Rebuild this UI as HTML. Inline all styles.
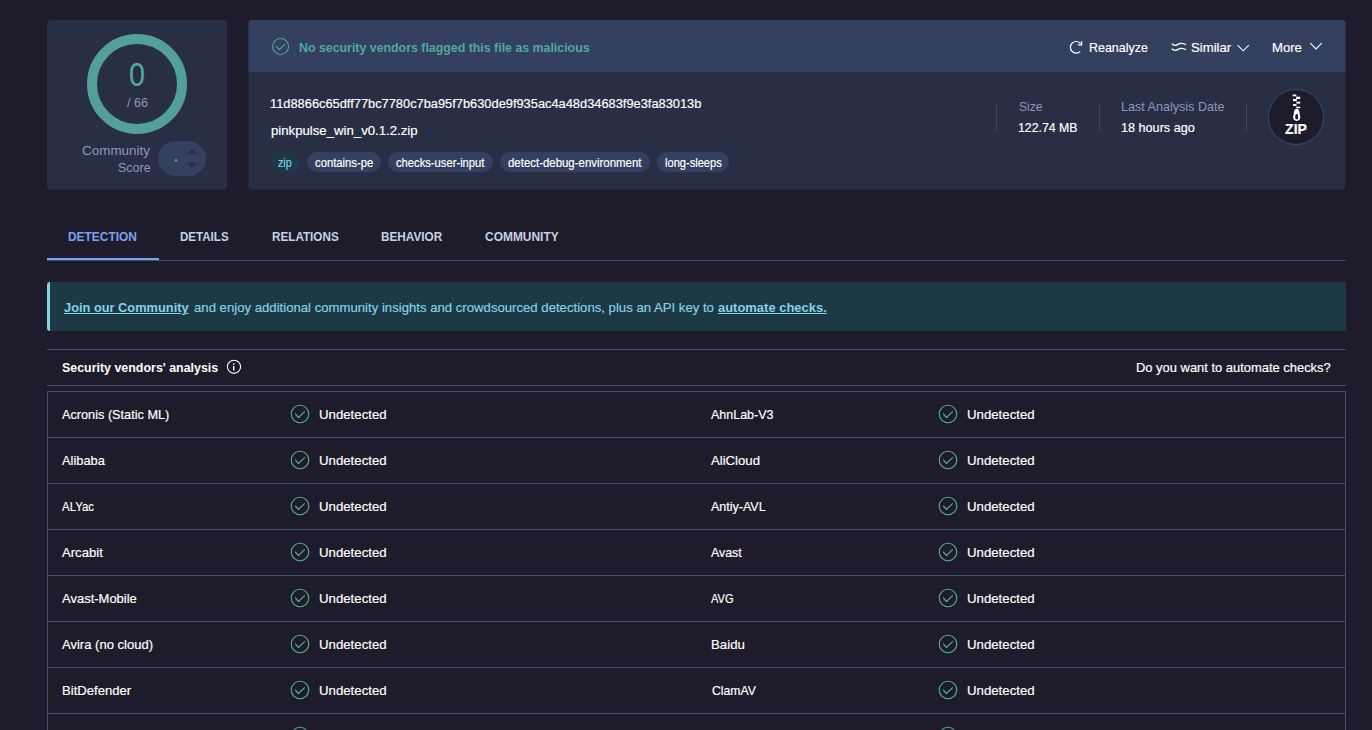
<!DOCTYPE html>
<html lang="en">
<head>
<meta charset="utf-8">
<title>VirusTotal - File - 11d8866c65dff77bc7780c7ba95f7b630de9f935ac4a48d34683f9e3fa83013b</title>
<style>
*{box-sizing:border-box;margin:0;padding:0}
html,body{width:1372px;height:730px;overflow:hidden;background:#1e1c2a}
body{position:relative;font-family:"Liberation Sans",Arial,sans-serif;color:#fff;font-size:13.3px;-webkit-text-stroke:0.18px}
.abs{position:absolute}
.t{position:absolute;white-space:nowrap;line-height:1;transform-origin:0 0}
svg{position:absolute;left:0;top:0;overflow:visible;pointer-events:none}
#ring{left:87px;top:34px;width:100px;height:100px;border-radius:50%;border:10px solid #52a098}
#vote{left:158px;top:140.6px;width:48px;height:35.5px;border-radius:18px;background:#334060}
.pill{position:absolute;top:152px;height:20px;border-radius:10px;background:#334060}
.vdiv{position:absolute;top:103px;width:1px;height:28px;background:#3d4766}
#tabline{left:47px;top:260px;width:1299px;height:1px;background:#424f70}
#tabactive{left:47px;top:258px;width:112px;height:2.3px;background:#7aa2f2}
#banner{left:47px;top:282px;width:1299px;height:49px;background:#1c3945;border-left:3px solid #84d2e4;border-radius:3px 0 0 3px}
.hline{position:absolute;left:47px;width:1299px;height:1px;background:#424f70}
#tbl{left:47px;top:391px;width:1299px;height:345px;border:1px solid #424f70;border-bottom:none}
.rowline{position:absolute;left:48px;width:1297px;height:1px;background:#424f70}
</style>
</head>
<body>
<!-- card backgrounds -->
<svg width="1372" height="730" viewBox="0 0 1372 730">
<defs><clipPath id="cc"><rect x="248.5" y="20" width="1097" height="169.5" rx="4"/></clipPath></defs>
<rect x="47" y="20" width="180" height="169.5" rx="4" fill="#282f45"/>
<rect x="248.5" y="20" width="1097" height="169.5" rx="4" fill="#282f45"/>
<rect x="240" y="20" width="1110" height="52" fill="#334060" clip-path="url(#cc)"/>
</svg>
<section id="score-widget">
<div id="ring" class="abs"></div>
<div id="vote" class="abs"></div>
<span class="t" style="left:128.73px;top:58.00px;font-size:33px;transform:scaleX(0.8706);color:#52a89b;">0</span>
<span class="t" style="left:127.10px;top:96.00px;font-size:13.6px;transform:scaleX(0.9225);color:#8d98b8;-webkit-text-stroke:0;">/ 66</span>
<span class="t" style="left:82.20px;top:144.00px;font-size:13.6px;transform:scaleX(0.9892);color:#8d98b8;-webkit-text-stroke:0;">Community</span>
<span class="t" style="left:118.20px;top:161.00px;font-size:13.6px;transform:scaleX(0.9213);color:#8d98b8;-webkit-text-stroke:0;">Score</span>
</section>
<section id="file-card">
<span class="t" style="left:298.60px;top:41.00px;font-size:13.6px;transform:scaleX(0.9094);font-weight:bold;-webkit-text-stroke:0;color:#52a89b;">No security vendors flagged this file as malicious</span>
<span class="t" style="left:1088.88px;top:41.00px;font-size:13.6px;transform:scaleX(0.9159);">Reanalyze</span>
<span class="t" style="left:1191.30px;top:41.00px;font-size:13.6px;transform:scaleX(0.9688);">Similar</span>
<span class="t" style="left:1272.33px;top:41.00px;font-size:13.6px;transform:scaleX(0.9656);">More</span>
<div class="pill" style="left:270.5px;width:29.4px;background:#1c3a46"></div>
<div class="pill" style="left:307px;width:73.8px"></div>
<div class="pill" style="left:388px;width:104.6px"></div>
<div class="pill" style="left:500px;width:150.2px"></div>
<div class="pill" style="left:657px;width:72px"></div>
<div class="vdiv" style="left:996px"></div>
<div class="vdiv" style="left:1099px"></div>
<div class="vdiv" style="left:1246px"></div>
<div class="abs" style="left:1268px;top:89px;width:56px;height:56px;border-radius:50%;background:#1e1c2a;border:1px solid #3c4a70"></div>
<span class="t" style="left:270.16px;top:97.00px;font-size:13.6px;transform:scaleX(0.9442);">11d8866c65dff77bc7780c7ba95f7b630de9f935ac4a48d34683f9e3fa83013b</span>
<span class="t" style="left:271.10px;top:124.00px;font-size:13.6px;transform:scaleX(0.9696);">pinkpulse_win_v0.1.2.zip</span>
<span class="t" style="left:278.30px;top:157.00px;font-size:12.2px;transform:scaleX(0.8733);color:#7fd0e2;">zip</span>
<span class="t" style="left:315.00px;top:157.00px;font-size:12.2px;transform:scaleX(0.9236);">contains-pe</span>
<span class="t" style="left:396.30px;top:157.00px;font-size:12.2px;transform:scaleX(0.9194);">checks-user-input</span>
<span class="t" style="left:507.90px;top:157.00px;font-size:12.2px;transform:scaleX(0.9378);">detect-debug-environment</span>
<span class="t" style="left:664.90px;top:157.00px;font-size:12.2px;transform:scaleX(0.9094);">long-sleeps</span>
<span class="t" style="left:1018.80px;top:100.00px;font-size:13.6px;transform:scaleX(0.8886);color:#8d98b8;-webkit-text-stroke:0;">Size</span>
<span class="t" style="left:1018.19px;top:121.00px;font-size:13.6px;transform:scaleX(0.9060);">122.74 MB</span>
<span class="t" style="left:1120.97px;top:100.00px;font-size:13.6px;transform:scaleX(0.9251);color:#8d98b8;-webkit-text-stroke:0;">Last Analysis Date</span>
<span class="t" style="left:1121.37px;top:121.00px;font-size:13.6px;transform:scaleX(0.9293);">18 hours ago</span>
<span class="t" style="left:1285.1px;top:122.3px;font-size:14px;font-weight:bold;">ZIP</span>
</section>
<nav id="tabs">
<div id="tabline" class="abs"></div>
<div id="tabactive" class="abs"></div>
<span class="t" style="left:68.20px;top:230.00px;font-size:13.0px;transform:scaleX(0.9180);font-weight:bold;-webkit-text-stroke:0;color:#7aa2f2;">DETECTION</span>
<span class="t" style="left:180.00px;top:230.00px;font-size:13.0px;transform:scaleX(0.8895);font-weight:bold;-webkit-text-stroke:0;color:#c7d0e8;">DETAILS</span>
<span class="t" style="left:271.50px;top:230.00px;font-size:13.0px;transform:scaleX(0.8996);font-weight:bold;-webkit-text-stroke:0;color:#c7d0e8;">RELATIONS</span>
<span class="t" style="left:381.20px;top:230.00px;font-size:13.0px;transform:scaleX(0.9053);font-weight:bold;-webkit-text-stroke:0;color:#c7d0e8;">BEHAVIOR</span>
<span class="t" style="left:485.00px;top:230.00px;font-size:13.0px;transform:scaleX(0.9194);font-weight:bold;-webkit-text-stroke:0;color:#c7d0e8;">COMMUNITY</span>
</nav>
<aside id="community-banner">
<div id="banner" class="abs"></div>
<span class="t" style="left:64.30px;top:301.00px;font-size:13.6px;transform:scaleX(0.9427);font-weight:bold;-webkit-text-stroke:0;color:#84d2e6;text-decoration:underline;text-underline-offset:0.6px;text-decoration-thickness:1px">Join our Community</span>
<span class="t" style="left:193.80px;top:301.00px;font-size:13.6px;transform:scaleX(0.9677);color:#84d2e6;">and enjoy additional community insights and crowdsourced detections, plus an API key to</span>
<span class="t" style="left:718.20px;top:301.00px;font-size:13.6px;transform:scaleX(0.9531);font-weight:bold;-webkit-text-stroke:0;color:#84d2e6;text-decoration:underline;text-underline-offset:0.6px;text-decoration-thickness:1px">automate checks.</span>
</aside>
<section id="vendors">
<div class="hline" style="top:349px"></div>
<div class="hline" style="top:385px"></div>
<div id="tbl" class="abs"></div>
<span class="t" style="left:61.60px;top:361.00px;font-size:13.6px;transform:scaleX(0.9137);font-weight:bold;-webkit-text-stroke:0;">Security vendors' analysis</span>
<span class="t" style="left:1136.15px;top:361.00px;font-size:13.6px;transform:scaleX(0.9510);">Do you want to automate checks?</span>
<div class="rowline" style="top:437px"></div>
<span class="t" style="left:62.20px;top:408.00px;font-size:13.6px;transform:scaleX(0.9345);">Acronis (Static ML)</span>
<span class="t" style="left:318.93px;top:408.00px;font-size:13.6px;transform:scaleX(0.9725);">Undetected</span>
<span class="t" style="left:710.90px;top:408.00px;font-size:13.6px;transform:scaleX(0.9190);">AhnLab-V3</span>
<span class="t" style="left:967.43px;top:408.00px;font-size:13.6px;transform:scaleX(0.9725);">Undetected</span>
<div class="rowline" style="top:483px"></div>
<span class="t" style="left:62.20px;top:454.00px;font-size:13.6px;transform:scaleX(0.9435);">Alibaba</span>
<span class="t" style="left:318.93px;top:454.00px;font-size:13.6px;transform:scaleX(0.9725);">Undetected</span>
<span class="t" style="left:710.90px;top:454.00px;font-size:13.6px;transform:scaleX(0.9668);">AliCloud</span>
<span class="t" style="left:967.43px;top:454.00px;font-size:13.6px;transform:scaleX(0.9725);">Undetected</span>
<div class="rowline" style="top:529px"></div>
<span class="t" style="left:62.20px;top:500.00px;font-size:13.6px;transform:scaleX(0.8421);">ALYac</span>
<span class="t" style="left:318.93px;top:500.00px;font-size:13.6px;transform:scaleX(0.9725);">Undetected</span>
<span class="t" style="left:710.90px;top:500.00px;font-size:13.6px;transform:scaleX(0.9186);">Antiy-AVL</span>
<span class="t" style="left:967.43px;top:500.00px;font-size:13.6px;transform:scaleX(0.9725);">Undetected</span>
<div class="rowline" style="top:575px"></div>
<span class="t" style="left:62.20px;top:546.00px;font-size:13.6px;transform:scaleX(0.9640);">Arcabit</span>
<span class="t" style="left:318.93px;top:546.00px;font-size:13.6px;transform:scaleX(0.9725);">Undetected</span>
<span class="t" style="left:710.90px;top:546.00px;font-size:13.6px;transform:scaleX(0.9095);">Avast</span>
<span class="t" style="left:967.43px;top:546.00px;font-size:13.6px;transform:scaleX(0.9725);">Undetected</span>
<div class="rowline" style="top:621px"></div>
<span class="t" style="left:62.20px;top:592.00px;font-size:13.6px;transform:scaleX(0.9555);">Avast-Mobile</span>
<span class="t" style="left:318.93px;top:592.00px;font-size:13.6px;transform:scaleX(0.9725);">Undetected</span>
<span class="t" style="left:710.90px;top:592.00px;font-size:13.6px;transform:scaleX(0.8148);">AVG</span>
<span class="t" style="left:967.43px;top:592.00px;font-size:13.6px;transform:scaleX(0.9725);">Undetected</span>
<div class="rowline" style="top:667px"></div>
<span class="t" style="left:62.20px;top:638.00px;font-size:13.6px;transform:scaleX(0.9584);">Avira (no cloud)</span>
<span class="t" style="left:318.93px;top:638.00px;font-size:13.6px;transform:scaleX(0.9725);">Undetected</span>
<span class="t" style="left:710.62px;top:638.00px;font-size:13.6px;transform:scaleX(0.9757);">Baidu</span>
<span class="t" style="left:967.43px;top:638.00px;font-size:13.6px;transform:scaleX(0.9725);">Undetected</span>
<div class="rowline" style="top:713px"></div>
<span class="t" style="left:62.04px;top:684.00px;font-size:13.6px;transform:scaleX(0.9641);">BitDefender</span>
<span class="t" style="left:318.93px;top:684.00px;font-size:13.6px;transform:scaleX(0.9725);">Undetected</span>
<span class="t" style="left:711.60px;top:684.00px;font-size:13.6px;transform:scaleX(0.8979);">ClamAV</span>
<span class="t" style="left:967.43px;top:684.00px;font-size:13.6px;transform:scaleX(0.9725);">Undetected</span>
<div class="rowline" style="top:759px"></div>
<span class="t" style="left:62.00px;top:730.00px;font-size:13.6px;">Bkav Pro</span>
<span class="t" style="left:318.93px;top:730.00px;font-size:13.6px;transform:scaleX(0.9725);">Undetected</span>
<span class="t" style="left:711.60px;top:730.00px;font-size:13.6px;">CMC</span>
<span class="t" style="left:967.43px;top:730.00px;font-size:13.6px;transform:scaleX(0.9725);">Undetected</span>
</section>
<!-- icons -->
<svg width="1372" height="730" viewBox="0 0 1372 730">
<circle cx="280.6" cy="46.5" r="7.95" fill="none" stroke="#4fa79b" stroke-width="1.1"/><polyline points="276.10,46.20 279.20,49.70 285.00,44.10" fill="none" stroke="#4fa79b" stroke-width="1.2000000000000002"/>
<circle cx="300" cy="414" r="8.73" fill="none" stroke="#52a89b" stroke-width="1.15"/><polyline points="295.08,413.67 298.47,417.50 304.81,411.37" fill="none" stroke="#52a89b" stroke-width="1.25"/><circle cx="948.0" cy="414" r="8.73" fill="none" stroke="#52a89b" stroke-width="1.15"/><polyline points="943.08,413.67 946.47,417.50 952.81,411.37" fill="none" stroke="#52a89b" stroke-width="1.25"/><circle cx="300" cy="460" r="8.73" fill="none" stroke="#52a89b" stroke-width="1.15"/><polyline points="295.08,459.67 298.47,463.50 304.81,457.37" fill="none" stroke="#52a89b" stroke-width="1.25"/><circle cx="948.0" cy="460" r="8.73" fill="none" stroke="#52a89b" stroke-width="1.15"/><polyline points="943.08,459.67 946.47,463.50 952.81,457.37" fill="none" stroke="#52a89b" stroke-width="1.25"/><circle cx="300" cy="506" r="8.73" fill="none" stroke="#52a89b" stroke-width="1.15"/><polyline points="295.08,505.67 298.47,509.50 304.81,503.37" fill="none" stroke="#52a89b" stroke-width="1.25"/><circle cx="948.0" cy="506" r="8.73" fill="none" stroke="#52a89b" stroke-width="1.15"/><polyline points="943.08,505.67 946.47,509.50 952.81,503.37" fill="none" stroke="#52a89b" stroke-width="1.25"/><circle cx="300" cy="552" r="8.73" fill="none" stroke="#52a89b" stroke-width="1.15"/><polyline points="295.08,551.67 298.47,555.50 304.81,549.37" fill="none" stroke="#52a89b" stroke-width="1.25"/><circle cx="948.0" cy="552" r="8.73" fill="none" stroke="#52a89b" stroke-width="1.15"/><polyline points="943.08,551.67 946.47,555.50 952.81,549.37" fill="none" stroke="#52a89b" stroke-width="1.25"/><circle cx="300" cy="598" r="8.73" fill="none" stroke="#52a89b" stroke-width="1.15"/><polyline points="295.08,597.67 298.47,601.50 304.81,595.37" fill="none" stroke="#52a89b" stroke-width="1.25"/><circle cx="948.0" cy="598" r="8.73" fill="none" stroke="#52a89b" stroke-width="1.15"/><polyline points="943.08,597.67 946.47,601.50 952.81,595.37" fill="none" stroke="#52a89b" stroke-width="1.25"/><circle cx="300" cy="644" r="8.73" fill="none" stroke="#52a89b" stroke-width="1.15"/><polyline points="295.08,643.67 298.47,647.50 304.81,641.37" fill="none" stroke="#52a89b" stroke-width="1.25"/><circle cx="948.0" cy="644" r="8.73" fill="none" stroke="#52a89b" stroke-width="1.15"/><polyline points="943.08,643.67 946.47,647.50 952.81,641.37" fill="none" stroke="#52a89b" stroke-width="1.25"/><circle cx="300" cy="690" r="8.73" fill="none" stroke="#52a89b" stroke-width="1.15"/><polyline points="295.08,689.67 298.47,693.50 304.81,687.37" fill="none" stroke="#52a89b" stroke-width="1.25"/><circle cx="948.0" cy="690" r="8.73" fill="none" stroke="#52a89b" stroke-width="1.15"/><polyline points="943.08,689.67 946.47,693.50 952.81,687.37" fill="none" stroke="#52a89b" stroke-width="1.25"/><circle cx="300" cy="736" r="8.73" fill="none" stroke="#52a89b" stroke-width="1.15"/><polyline points="295.08,735.67 298.47,739.50 304.81,733.37" fill="none" stroke="#52a89b" stroke-width="1.25"/><circle cx="948.0" cy="736" r="8.73" fill="none" stroke="#52a89b" stroke-width="1.15"/><polyline points="943.08,735.67 946.47,739.50 952.81,733.37" fill="none" stroke="#52a89b" stroke-width="1.25"/>
<!-- vote dot + arrows -->
<circle cx="176" cy="160.3" r="1.2" fill="#7f8cae"/>
<path d="M186.8 153.8 L191.8 148.9 L196.8 153.8Z M186.8 162.9 L196.8 162.9 L191.8 168.1Z" fill="#282e48"/>
<!-- reanalyze -->
<path d="M1080.3 51.4 A5.8 5.8 0 1 1 1080.6 43.5" fill="none" stroke="#fff" stroke-width="1.2"/>
<path d="M1081.6 41.2 V44.9 H1077.9" fill="none" stroke="#fff" stroke-width="1.2"/>
<!-- similar -->
<path d="M1171.8 43.7 Q1173.5 45.5 1175.5 45.3 C1177.5 45.1 1179 43.3 1181.3 43.4 Q1184 43.5 1186 44.8 M1171.8 48.7 Q1173.5 50.5 1175.5 50.3 C1177.5 50.1 1179 48.3 1181.3 48.4 Q1184 48.5 1186 49.8" fill="none" stroke="#fff" stroke-width="1.3"/>
<!-- chevrons -->
<path d="M1237.6 45.2 L1243.2 50.8 L1248.8 45.2 M1310.2 43.2 L1316 48.9 L1321.8 43.2" fill="none" stroke="#fff" stroke-width="1.05"/>
<!-- zip icon -->
<g fill="#fff">
<rect x="1292.7" y="94.5" width="3.6" height="1.8"/><rect x="1296.1" y="96.7" width="4.1" height="2.3"/>
<rect x="1293" y="99" width="3.8" height="2.1"/><rect x="1296.4" y="101.7" width="3.8" height="1.9"/>
<rect x="1293" y="104.1" width="3.5" height="1.9"/><rect x="1296.1" y="106.7" width="4.1" height="1.5"/>
<path fill-rule="evenodd" d="M1296.7 108.7 C1298.2 108.7 1298.9 109.6 1299.2 111.2 L1300.2 116.5 C1300.6 119.2 1299 120.9 1296.7 120.9 C1294.4 120.9 1292.8 119.2 1293.2 116.5 L1294.2 111.2 C1294.5 109.6 1295.2 108.7 1296.7 108.7Z M1296.7 114.1 C1295.7 114.1 1295.3 114.8 1295.3 115.6 V118 C1295.3 118.8 1295.8 119.4 1296.7 119.4 C1297.6 119.4 1298.1 118.8 1298.1 118 V115.6 C1298.1 114.8 1297.7 114.1 1296.7 114.1Z"/>
</g>
<!-- info -->
<circle cx="234" cy="366.8" r="6.6" fill="none" stroke="#fff" stroke-width="1.1"/>
<rect x="233" y="366" width="1.4" height="4.5" fill="#fff"/><circle cx="233.7" cy="364.1" r="0.85" fill="#fff"/>
</svg>
</body>
</html>
